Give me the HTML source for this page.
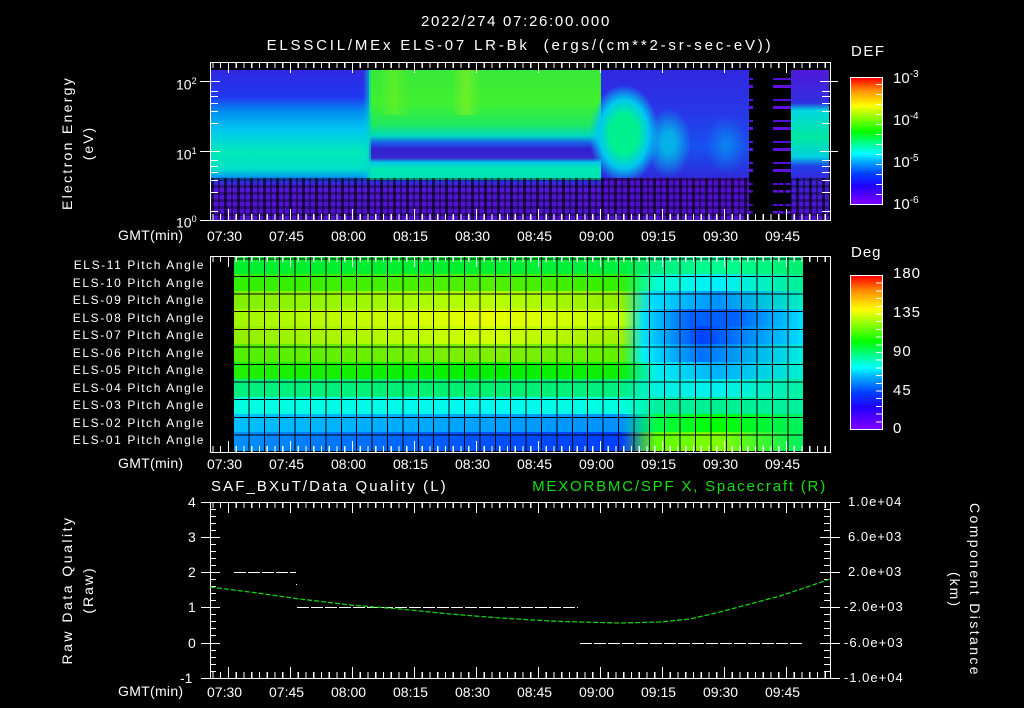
<!DOCTYPE html>
<html><head><meta charset="utf-8">
<style>
html,body{margin:0;padding:0;background:#000;}
body{width:1024px;height:708px;position:relative;overflow:hidden;font-family:"Liberation Sans",sans-serif;color:#fff;}
.a{position:absolute;}
.t{position:absolute;white-space:nowrap;font-size:14px;line-height:16px;color:#fff;}
.s{font-size:13px;letter-spacing:1px;}
.fr{position:absolute;border:1px solid #fff;box-sizing:border-box;}
.xt{position:absolute;height:6px;background:repeating-linear-gradient(90deg,#fff 0 1px,transparent 1px 7.75px);}
.xm{position:absolute;height:11px;background:repeating-linear-gradient(90deg,#fff 0 1px,transparent 1px 62px);}
.cb{position:absolute;border:1px solid #fff;box-sizing:border-box;background:linear-gradient(to top,#8000ff 0%,#2000ff 14%,#0040ff 24%,#00b0ff 34%,#00ffff 40%,#00ff90 48%,#00ff00 57%,#a0ff00 70%,#ffff00 78%,#ff9000 90%,#ff0000 100%);}
.ct{position:absolute;width:6px;background:repeating-linear-gradient(0deg,transparent 0 9px,#fff 9px 10px);}
.row{position:absolute;left:234px;width:570px;height:17.6px;}
.r{position:absolute;}
</style></head><body>

<div class="t" style="left:0;width:1024px;text-align:center;top:14px;font-size:15px;letter-spacing:1.7px;padding-left:4px">2022/274 07:26:00.000</div>
<div class="t" style="left:0;width:1040px;text-align:center;top:38px;font-size:15px;letter-spacing:2.8px">ELSSCIL/MEx ELS-07 LR-Bk&nbsp; (ergs/(cm**2-sr-sec-eV))</div>

<!-- TOP PANEL -->
<div class="a" style="left:211px;top:70px;width:618px;height:150px;overflow:hidden;background:linear-gradient(#3028e0 0%,#2038f0 18%,#0090f0 28%,#00c8f0 40%,#00e8b8 55%,#00e0c8 66%,#00a0f0 71%,#2830e0 74%,#5018d8 78%,#5010d0 100%);">
  <div class="r" style="left:158px;top:0;width:232px;height:110px;background:linear-gradient(#38e838 0%,#40f030 30%,#20e860 50%,#00d8c0 60%,#1860e8 66%,#3020d0 72%,#3828d0 80%,#00c8e8 84%,#00e8b0 90%,#00e0b8 100%);"></div>
  <div class="r" style="left:152px;top:0;width:8px;height:110px;background:linear-gradient(90deg,rgba(0,200,240,0),rgba(0,210,200,.8));"></div>
  <div class="r" style="left:240px;top:0;width:30px;height:45px;background:linear-gradient(90deg,rgba(140,240,32,0),rgba(140,240,32,.6),rgba(140,240,32,0))"></div>
  <div class="r" style="left:168px;top:0;width:30px;height:45px;background:linear-gradient(90deg,rgba(120,240,32,0),rgba(120,240,32,.5),rgba(120,240,32,0))"></div>
  <div class="r" style="left:390px;top:0;width:155px;height:110px;background:linear-gradient(#3028e0,#2838e8 40%,#1850f0 70%,#3028d8);"></div>
  <div class="r" style="left:378px;top:15px;width:70px;height:98px;background:radial-gradient(closest-side,#00f090 40%,#00c8f0 70%,rgba(0,160,240,0) 100%)"></div>
  <div class="r" style="left:435px;top:38px;width:45px;height:70px;background:radial-gradient(closest-side,rgba(0,200,230,.8) 30%,rgba(0,160,240,0) 100%)"></div>
  <div class="r" style="left:495px;top:45px;width:40px;height:60px;background:radial-gradient(closest-side,rgba(0,170,240,.6),rgba(0,160,240,0))"></div>
  <div class="r" style="left:390px;top:108px;width:228px;height:42px;background:#5010d0"></div>
  <div class="r" style="left:538px;top:0;width:42px;height:150px;background:repeating-linear-gradient(0deg,#000 0 6px,#6010e0 6px 9px,#000 9px 14px,#5010d8 14px 16px,#000 16px 21px);"></div>
  <div class="r" style="left:542px;top:0;width:20px;height:150px;background:#000"></div>
  <div class="r" style="left:580px;top:0;width:38px;height:150px;background:linear-gradient(#5018d8 0%,#3030e0 22%,#00d8e0 27%,#00e8a0 45%,#00d0e0 58%,#2040e8 64%,#4020d8 75%,#5010d0 100%);"></div>
  <div class="r" style="left:0;top:108px;width:618px;height:42px;background:repeating-linear-gradient(90deg,rgba(0,0,0,.6) 0 3px,transparent 3px 7px,rgba(0,0,0,.4) 7px 9px,transparent 9px 13px),repeating-linear-gradient(0deg,transparent 0 4px,rgba(0,0,0,.35) 4px 7px);"></div>
</div>
<div class="fr" style="left:210px;top:62px;width:621px;height:159px;"></div>
<div class="xt" style="left:210px;top:62px;width:620px;background-position:2.5px 0"></div>
<div class="xm" style="left:210px;top:62px;width:620px;background-position:18px 0"></div>
<div class="xt" style="left:210px;top:214px;width:620px;background-position:2.5px 0"></div>
<div class="xm" style="left:210px;top:209px;width:620px;background-position:18px 0"></div>
<svg class="a" style="left:200px;top:60px" width="650" height="165">
<g stroke="#fff" stroke-width="1">
<path d="M0 21.5H20M0 91.5H20M0 160.5H20M620 21.5H638M620 91.5H638"/>
<path d="M10 31.5H18M10 36.5H18M10 43.5H18M10 51.5H18M10 63.5H18M10 100.5H18M10 106.5H18M10 112.5H18M10 120.5H18M10 132.5H18M10 151.5H18"/>
<path d="M622 31.5H630M622 36.5H630M622 43.5H630M622 51.5H630M622 63.5H630M622 100.5H630M622 106.5H630M622 112.5H630M622 120.5H630M622 132.5H630M622 151.5H630"/>
</g></svg>
<div class="t" style="left:176px;top:73px">10<sup style="font-size:9px">2</sup></div>
<div class="t" style="left:176px;top:143px">10<sup style="font-size:9px">1</sup></div>
<div class="t" style="left:176px;top:211px">10<sup style="font-size:9px">0</sup></div>
<div class="t" style="left:67px;top:143px;transform:translate(-50%,-50%) rotate(-90deg);letter-spacing:2.3px">Electron Energy</div>
<div class="t" style="left:88px;top:143px;transform:translate(-50%,-50%) rotate(-90deg);letter-spacing:2px">(eV)</div>
<div class="t" style="left:118px;top:227px;letter-spacing:.3px">GMT(min)</div>

<!-- colorbar 1 -->
<div class="t" style="left:851px;top:44px;font-size:15px;letter-spacing:1.5px">DEF</div>
<div class="cb" style="left:850px;top:77px;width:33px;height:128px;"></div>
<div class="ct" style="left:876px;top:78px;height:126px"></div>
<div class="t" style="left:893px;top:67px;font-size:15px">10<sup style="font-size:10px">-3</sup></div>
<div class="t" style="left:893px;top:109px;font-size:15px">10<sup style="font-size:10px">-4</sup></div>
<div class="t" style="left:893px;top:151px;font-size:15px">10<sup style="font-size:10px">-5</sup></div>
<div class="t" style="left:893px;top:193px;font-size:15px">10<sup style="font-size:10px">-6</sup></div>

<div class="a" style="left:0;top:228px;width:1024px;height:16px">
<div class="t" style="left:207px">07:30</div><div class="t" style="left:269px">07:45</div><div class="t" style="left:331px">08:00</div><div class="t" style="left:393px">08:15</div><div class="t" style="left:455px">08:30</div><div class="t" style="left:517px">08:45</div><div class="t" style="left:579px">09:00</div><div class="t" style="left:641px">09:15</div><div class="t" style="left:703px">09:30</div><div class="t" style="left:765px">09:45</div>
</div>

<!-- MIDDLE PANEL -->
<div class="row" style="top:256px;background:linear-gradient(90deg,#00f030,#00f030 45%,#00f040 68%,#00f080 74%,#00ff90 85%,#00f070)"></div>
<div class="row" style="top:273.6px;background:linear-gradient(90deg,#30f000,#50f000 45%,#30f000 68%,#00ffd0 74%,#00f0ff 85%,#00f090)"></div>
<div class="row" style="top:291.2px;background:linear-gradient(90deg,#80f000,#b8ff00 45%,#90f000 68%,#00e0ff 73%,#0090ff 85%,#00f0c0)"></div>
<div class="row" style="top:308.8px;background:linear-gradient(90deg,#a0f800,#e8ff00 45%,#c0ff00 68%,#00e0ff 72%,#0060ff 80%,#0060ff 88%,#00e0ff)"></div>
<div class="row" style="top:326.4px;background:linear-gradient(90deg,#90f000,#d0ff00 45%,#a0f000 68%,#00e0ff 72%,#0040ff 82%,#00e0ff)"></div>
<div class="row" style="top:344px;background:linear-gradient(90deg,#50f000,#80f000 45%,#60f000 68%,#00f0ff 72%,#0070ff 82%,#00f0e0)"></div>
<div class="row" style="top:361.6px;background:linear-gradient(90deg,#20f000,#00f000 45%,#10f000 68%,#00f0f0 74%,#00b0ff 85%,#00f0d0)"></div>
<div class="row" style="top:379.2px;background:linear-gradient(90deg,#00f080,#00f070 45%,#00f080 68%,#00f0e0 74%,#00f0f0 85%,#00f0a0)"></div>
<div class="row" style="top:396.8px;background:linear-gradient(90deg,#00ffe0,#00f8f0 45%,#00ffe0 68%,#00f0a0 74%,#00f090 85%,#00f0a0)"></div>
<div class="row" style="top:414.4px;background:linear-gradient(90deg,#00c0ff,#00a0ff 45%,#0090ff 68%,#00ff40 74%,#00ff00 85%,#00f060)"></div>
<div class="row" style="top:432px;height:19px;background:linear-gradient(90deg,#0090ff,#0050ff 45%,#0040ff 68%,#60ff00 74%,#80ff00 85%,#00f060)"></div>
<div class="a" style="left:234px;top:256px;width:571px;height:195px;background:repeating-linear-gradient(90deg,transparent 0 14.4px,#000 14.4px 15.4px),repeating-linear-gradient(0deg,transparent 0 16.6px,#000 16.6px 17.6px);background-position:0 0,0 1px"></div>
<div class="fr" style="left:210px;top:256px;width:621px;height:197px;"></div>
<div class="xt" style="left:210px;top:256px;width:620px;background-position:2.5px 0"></div>
<div class="xm" style="left:210px;top:256px;width:620px;background-position:18px 0"></div>
<div class="xt" style="left:210px;top:446px;width:620px;background-position:2.5px 0"></div>
<div class="xm" style="left:210px;top:441px;width:620px;background-position:18px 0"></div>
<div class="a" style="left:0;top:257px;width:205px;text-align:right;font-size:12px;line-height:17.55px;letter-spacing:1.6px">
<div>ELS-11 Pitch Angle</div><div>ELS-10 Pitch Angle</div><div>ELS-09 Pitch Angle</div><div>ELS-08 Pitch Angle</div><div>ELS-07 Pitch Angle</div><div>ELS-06 Pitch Angle</div><div>ELS-05 Pitch Angle</div><div>ELS-04 Pitch Angle</div><div>ELS-03 Pitch Angle</div><div>ELS-02 Pitch Angle</div><div>ELS-01 Pitch Angle</div>
</div>
<div class="t" style="left:118px;top:455px;letter-spacing:.3px">GMT(min)</div>
<div class="a" style="left:0;top:456px;width:1024px;height:16px">
<div class="t" style="left:207px">07:30</div><div class="t" style="left:269px">07:45</div><div class="t" style="left:331px">08:00</div><div class="t" style="left:393px">08:15</div><div class="t" style="left:455px">08:30</div><div class="t" style="left:517px">08:45</div><div class="t" style="left:579px">09:00</div><div class="t" style="left:641px">09:15</div><div class="t" style="left:703px">09:30</div><div class="t" style="left:765px">09:45</div>
</div>

<!-- colorbar 2 -->
<div class="t" style="left:851px;top:245px;font-size:15px;letter-spacing:1px">Deg</div>
<div class="cb" style="left:850px;top:275px;width:33px;height:155px;"></div>
<div class="ct" style="left:876px;top:276px;height:153px;background:repeating-linear-gradient(0deg,transparent 0 6.7px,#fff 6.7px 7.7px)"></div>
<div class="t" style="left:893px;top:266px;font-size:15px;letter-spacing:1px">180</div>
<div class="t" style="left:893px;top:305px;font-size:15px;letter-spacing:1px">135</div>
<div class="t" style="left:893px;top:344px;font-size:15px;letter-spacing:1px">90</div>
<div class="t" style="left:893px;top:383px;font-size:15px;letter-spacing:1px">45</div>
<div class="t" style="left:893px;top:421px;font-size:15px">0</div>

<!-- BOTTOM PANEL -->
<div class="t" style="left:211px;top:479px;font-size:15px;letter-spacing:2.1px">SAF_BXuT/Data Quality (L)</div>
<div class="t" style="left:400px;width:427px;text-align:right;top:479px;font-size:15px;letter-spacing:1.8px;color:#10e010">MEXORBMC/SPF X, Spacecraft (R)</div>
<div class="fr" style="left:210px;top:502px;width:621px;height:177px;"></div>
<div class="xt" style="left:210px;top:502px;width:620px;background-position:2.5px 0"></div>
<div class="xm" style="left:210px;top:502px;width:620px;background-position:18px 0"></div>
<div class="xt" style="left:210px;top:672px;width:620px;background-position:2.5px 0"></div>
<div class="xm" style="left:210px;top:667px;width:620px;background-position:18px 0"></div>
<svg class="a" style="left:0;top:0" width="1024" height="708">
<g stroke="#fff" stroke-width="1">
<path d="M201 502.5H220M201 537.5H220M201 572.5H220M201 607.5H220M201 643.5H220M201 678.5H220"/>
<path d="M210 509.5H216M210 516.5H216M210 523.5H216M210 530.5H216M210 544.5H216M210 551.5H216M210 558.5H216M210 565.5H216M210 579.5H216M210 586.5H216M210 593.5H216M210 600.5H216M210 614.5H216M210 621.5H216M210 628.5H216M210 635.5H216M210 650.5H216M210 657.5H216M210 664.5H216M210 671.5H216"/>
<path d="M820 502.5H840M820 537.5H840M820 572.5H840M820 607.5H840M820 643.5H840M820 678.5H840"/>
<path d="M824 509.5H830M824 516.5H830M824 523.5H830M824 530.5H830M824 544.5H830M824 551.5H830M824 558.5H830M824 565.5H830M824 579.5H830M824 586.5H830M824 593.5H830M824 600.5H830M824 614.5H830M824 621.5H830M824 628.5H830M824 635.5H830M824 650.5H830M824 657.5H830M824 664.5H830M824 671.5H830"/>
<path d="M234 572.5H296M297 607.5H578M580 643.5H804M296 584.5H297" stroke-dasharray="12 2"/>
</g>
<polyline fill="none" stroke="#10d010" stroke-width="1.3" stroke-dasharray="5 2" points="210,587 250,592 300,599 350,605 400,609 450,614 500,618 550,621 580,622 620,623 660,622 690,619 720,612 750,604 780,596 810,586 830,579"/>
</svg>
<div class="t" style="left:188px;top:494px">4</div>
<div class="t" style="left:188px;top:529px">3</div>
<div class="t" style="left:188px;top:564px">2</div>
<div class="t" style="left:188px;top:599px">1</div>
<div class="t" style="left:188px;top:635px">0</div>
<div class="t" style="left:180px;top:670px">-1</div>
<div class="t s" style="left:848px;top:494px">1.0e+04</div>
<div class="t s" style="left:848px;top:529px">6.0e+03</div>
<div class="t s" style="left:848px;top:564px">2.0e+03</div>
<div class="t s" style="left:844px;top:599px">-2.0e+03</div>
<div class="t s" style="left:844px;top:635px">-6.0e+03</div>
<div class="t s" style="left:844px;top:670px">-1.0e+04</div>
<div class="t" style="left:67px;top:590px;transform:translate(-50%,-50%) rotate(-90deg);letter-spacing:2.5px">Raw Data Quality</div>
<div class="t" style="left:88px;top:590px;transform:translate(-50%,-50%) rotate(-90deg);letter-spacing:2px">(Raw)</div>
<div class="t" style="left:975px;top:590px;transform:translate(-50%,-50%) rotate(90deg);letter-spacing:2.4px">Component Distance</div>
<div class="t" style="left:955px;top:590px;transform:translate(-50%,-50%) rotate(90deg);letter-spacing:2px">(km)</div>
<div class="t" style="left:118px;top:683px;letter-spacing:.3px">GMT(min)</div>
<div class="a" style="left:0;top:684px;width:1024px;height:16px">
<div class="t" style="left:207px">07:30</div><div class="t" style="left:269px">07:45</div><div class="t" style="left:331px">08:00</div><div class="t" style="left:393px">08:15</div><div class="t" style="left:455px">08:30</div><div class="t" style="left:517px">08:45</div><div class="t" style="left:579px">09:00</div><div class="t" style="left:641px">09:15</div><div class="t" style="left:703px">09:30</div><div class="t" style="left:765px">09:45</div>
</div>
</body></html>
